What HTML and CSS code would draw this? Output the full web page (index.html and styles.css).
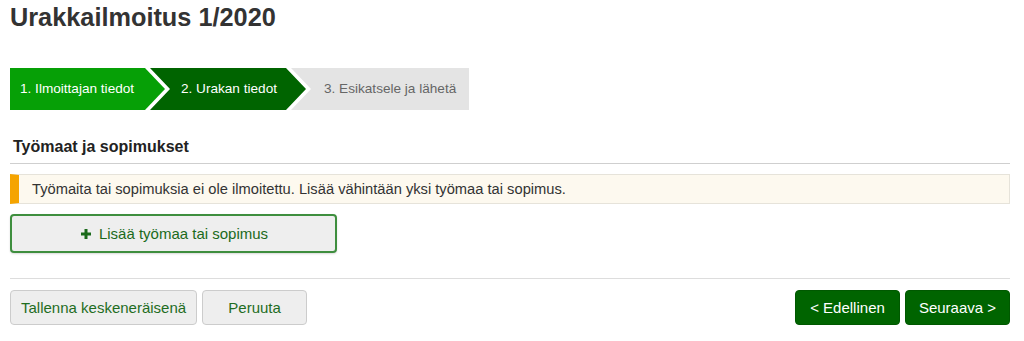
FILE: index.html
```html
<!DOCTYPE html>
<html lang="fi">
<head>
<meta charset="utf-8">
<title>Urakkailmoitus 1/2020</title>
<link rel="stylesheet" href="styles.css">
</head>
<body>
<div class="page">
  <h1 class="title">Urakkailmoitus 1/2020</h1>

  <nav class="steps">
    <div class="step step-done">1. Ilmoittajan tiedot</div>
    <div class="step step-current">2. Urakan tiedot</div>
    <div class="step step-todo">3. Esikatsele ja lähetä</div>
  </nav>

  <h2 class="section-title">Työmaat ja sopimukset</h2>

  <div class="alert">Työmaita tai sopimuksia ei ole ilmoitettu. Lisää vähintään yksi työmaa tai sopimus.</div>

  <button class="add-btn" type="button">
    <svg class="plus" viewBox="0 0 10 10" width="10" height="10" aria-hidden="true">
      <path d="M3.5 0h3v3.5H10v3H6.5V10h-3V6.5H0v-3h3.5z" fill="#1b6a1b"/>
    </svg>
    <span>Lisää työmaa tai sopimus</span>
  </button>

  <div class="actions">
    <div class="actions-left">
      <button class="btn btn-light" type="button">Tallenna keskeneräisenä</button>
      <button class="btn btn-light btn-narrow" type="button">Peruuta</button>
    </div>
    <div class="actions-right">
      <button class="btn btn-dark btn-narrow" type="button">&lt; Edellinen</button>
      <button class="btn btn-dark btn-narrow" type="button">Seuraava &gt;</button>
    </div>
  </div>
</div>
</body>
</html>
```

FILE: styles.css
```css
* { box-sizing: border-box; }

html, body {
  margin: 0;
  padding: 0;
  background: #ffffff;
}

body {
  font-family: "Liberation Sans", Arial, sans-serif;
  color: #333333;
}

.page {
  width: 1000px;
  margin-left: 10px;
}

.title {
  margin: 2px 0 0;
  font-size: 25.3px;
  line-height: 30px;
  font-weight: bold;
  color: #333333;
}

/* Stepper */
.steps {
  display: flex;
  margin-top: 36px;
  height: 42px;
}

.step {
  height: 42px;
  line-height: 42px;
  font-size: 13.6px;
  white-space: nowrap;
}

.step-done {
  width: 155px;
  padding-left: 10px;
  background: #06a006;
  color: #ffffff;
  clip-path: polygon(0 0, 135px 0, 155px 50%, 135px 100%, 0 100%);
}

.step-current {
  width: 156px;
  margin-left: -15px;
  padding-left: 31px;
  background: #006400;
  color: #ffffff;
  clip-path: polygon(0 0, 136px 0, 156px 50%, 136px 100%, 0 100%, 20px 50%);
}

.step-todo {
  width: 178px;
  margin-left: -15px;
  padding-left: 33px;
  background: #e4e4e4;
  color: #666666;
  clip-path: polygon(0 0, 100% 0, 100% 100%, 0 100%, 20px 50%);
}

/* Section */
.section-title {
  margin: 27px 0 0;
  padding: 0 0 6px 3px;
  font-size: 16px;
  line-height: 20px;
  font-weight: bold;
  color: #222222;
  border-bottom: 1px solid #cfcfcf;
}

.alert {
  margin-top: 10px;
  height: 30px;
  line-height: 28px;
  padding-left: 13px;
  font-size: 14.7px;
  color: #333333;
  background: #fdf9ef;
  border: 1px solid #e6e3da;
  border-left: 9px solid #f5a400;
}

.add-btn {
  display: flex;
  align-items: center;
  justify-content: center;
  gap: 8px;
  margin-top: 10px;
  width: 327px;
  height: 39px;
  padding: 0 0 0 2px;
  font-family: "Liberation Sans", Arial, sans-serif;
  font-size: 15px;
  color: #1b6a1b;
  background: #eeeeee;
  border: 2px solid #3e8e3e;
  border-radius: 4px;
  box-shadow: 0 1px 2px rgba(0,0,0,0.15);
}

.plus {
  display: block;
}

/* Bottom actions */
.actions {
  display: flex;
  justify-content: space-between;
  margin-top: 25px;
  padding-top: 11px;
  border-top: 1px solid #dddddd;
}

.actions-left,
.actions-right {
  display: flex;
  gap: 5px;
}

.btn {
  height: 35px;
  padding: 0 10px;
  font-family: "Liberation Sans", Arial, sans-serif;
  font-size: 15px;
  border-radius: 4px;
  white-space: nowrap;
}

.btn-narrow {
  width: 105px;
  padding: 0;
}

.btn-light {
  background: #eeeeee;
  color: #1f6d1f;
  border: 1px solid #cccccc;
}

.btn-dark {
  background: #006400;
  color: #ffffff;
  border: 1px solid #005800;
}
```
